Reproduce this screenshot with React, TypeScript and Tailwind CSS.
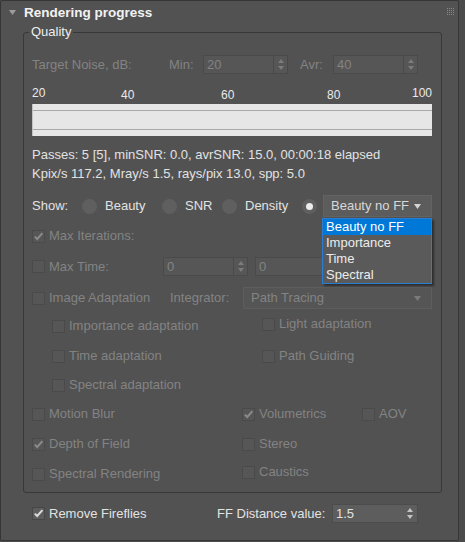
import React from 'react';

const DIM = 'text-[#838383]';
const LIT = 'text-[#e2e2e2]';

function Check({ checked = false, enabled = false }: { checked?: boolean; enabled?: boolean }) {
  return (
    <span
      className={`flex h-[13px] w-[13px] shrink-0 items-center justify-center border ${
        enabled ? 'border-[#474747] bg-[#5d5d5d]' : 'border-[#4a4a4a] bg-[#565656]'
      }`}
    >
      {checked && (
        <svg width="11" height="11" viewBox="0 0 11 11">
          <path d="M1.8 5.6 L4.2 8 L9.4 2.2" fill="none" stroke={enabled ? '#dadada' : '#8a8a8a'} strokeWidth="2" />
        </svg>
      )}
    </span>
  );
}

function CheckRow({
  label,
  checked = false,
  enabled = false,
  className = '',
}: {
  label: string;
  checked?: boolean;
  enabled?: boolean;
  className?: string;
}) {
  return (
    <div className={`flex h-[16px] items-center ${className}`}>
      <Check checked={checked} enabled={enabled} />
      <span className={`ml-[4px] whitespace-nowrap ${enabled ? LIT : DIM}`}>{label}</span>
    </div>
  );
}

function Spin({ value, enabled = false, className = '' }: { value: string; enabled?: boolean; className?: string }) {
  const arrow = enabled ? '#c4c4c4' : '#7c7c7c';
  return (
    <div
      className={`flex h-[19px] w-[85px] shrink-0 border ${
        enabled ? 'border-[#4c4c4c] bg-[#5d5d5d]' : 'border-[#4a4a4a] bg-[#565656]'
      } ${className}`}
    >
      <span className={`flex-1 pl-[3px] leading-[17px] ${enabled ? LIT : DIM}`}>{value}</span>
      <span
        className={`flex w-[14px] items-center justify-center ${enabled ? '' : 'border-l border-[#4a4a4a]'}`}
      >
        <svg width="6" height="11" viewBox="0 0 6 11">
          <path d="M0 4 L3 0 L6 4 Z" fill={arrow} />
          <path d="M0 7 L6 7 L3 11 Z" fill={arrow} />
        </svg>
      </span>
    </div>
  );
}

function Combo({ value, enabled = false, className = '' }: { value: string; enabled?: boolean; className?: string }) {
  return (
    <div
      className={`flex h-[22px] items-center border pl-[7px] pr-[10px] ${
        enabled ? 'border-[#636363] bg-[#5c5c5c] text-[#d8d8d8]' : `border-[#5d5d5d] bg-[#555555] ${DIM}`
      } ${className}`}
    >
      <span className="flex-1 whitespace-nowrap">{value}</span>
      <svg width="7" height="5" viewBox="0 0 7 5">
        <path d="M0 0 H7 L3.5 5 Z" fill={enabled ? '#d4d4d4' : '#7a7a7a'} />
      </svg>
    </div>
  );
}

function Radio({ on = false }: { on?: boolean }) {
  return (
    <span className="flex h-[15px] w-[15px] shrink-0 items-center justify-center rounded-full bg-[#5f5f5f]">
      {on && <span className="h-[7px] w-[7px] rounded-full bg-[#ececec]" />}
    </span>
  );
}

function Grip() {
  const dots = [];
  for (let r = 0; r < 4; r++) {
    for (let c = 0; c < 4; c++) {
      dots.push(<rect key={`${r}-${c}`} x={c * 2} y={r * 2} width="1" height="1" fill="#8a8a8a" />);
    }
  }
  return (
    <svg className="ml-auto mr-[3px] mt-[7px] self-start" width="8" height="8" viewBox="0 0 8 8">
      {dots}
    </svg>
  );
}

export default function App() {
  const menu = ['Beauty no FF', 'Importance', 'Time', 'Spectral'];

  return (
    <div className="h-[542px] w-[465px] bg-[#4b4b4b] font-['Liberation_Sans',Arial,sans-serif] text-[13px] leading-[16px]">
      <div className="h-[541px] w-[459px] rounded-[2px] border border-[#363636] bg-[#525252]">
        {/* Header */}
        <div className="flex h-[23px] items-center pl-[8px]">
          <svg width="7" height="5" viewBox="0 0 7 5">
            <path d="M0 0 H7 L3.5 5 Z" fill="#9c9c9c" />
          </svg>
          <span className="ml-[8px] text-[13.5px] font-bold text-[#f2f2f2]">Rendering progress</span>
          <Grip />
        </div>

        {/* Quality group */}
        <fieldset className="ml-[22px] w-[419px] rounded-[3px] border border-[#383838] px-[8px] pb-[10px]">
          <legend className="-ml-[3px] px-[2px] text-[#eeeeee]">Quality</legend>

          <div className="mt-[15px] flex h-[19px] items-center">
            <span className={`w-[137px] ${DIM}`}>Target Noise, dB:</span>
            <span className={`w-[34px] ${DIM}`}>Min:</span>
            <Spin value="20" />
            <span className={`ml-[12px] w-[33px] ${DIM}`}>Avr:</span>
            <Spin value="40" />
          </div>

          <div className="flex h-[30px] w-[400px] items-end text-[12px] leading-[14px] text-[#eaeaea]">
            <span className="mb-[4px] w-[89px]">20</span>
            <span className="mb-[2px] w-[100px]">40</span>
            <span className="mb-[2px] w-[106px]">60</span>
            <span className="mb-[2px] w-[84px]">80</span>
            <span className="mb-[4px] flex-1 text-right">100</span>
          </div>

          <div className="h-[32px] w-[400px] border-l border-[#c2c2c2] bg-[#e6e6e6] pt-[6px]">
            <div className="h-[20px] border-y border-[#a9a9a9]" />
          </div>

          <div className={`mt-[11px] whitespace-nowrap ${LIT}`}>
            Passes: 5 [5], minSNR: 0.0, avrSNR: 15.0, 00:00:18 elapsed
          </div>
          <div className={`mt-[3px] whitespace-nowrap ${LIT}`}>Kpix/s 117.2, Mray/s 1.5, rays/pix 13.0, spp: 5.0</div>

          <div className="mt-[13px] flex h-[22px] items-center">
            <span className={`w-[50px] ${LIT}`}>Show:</span>
            <span className="flex w-[80px] items-center">
              <Radio />
              <span className={`ml-[8px] ${LIT}`}>Beauty</span>
            </span>
            <span className="flex w-[60px] items-center">
              <Radio />
              <span className={`ml-[8px] ${LIT}`}>SNR</span>
            </span>
            <span className="flex w-[80px] items-center">
              <Radio />
              <span className={`ml-[8px] ${LIT}`}>Density</span>
            </span>
            <Radio on />
            <div className="relative ml-[6px] w-[109px]">
              <Combo value="Beauty no FF" enabled />
              <div className="absolute left-[-1px] top-[23px] z-10 w-[110px] border border-[#2a7dd0] bg-[#5a5a5a] shadow-[2px_2px_2px_rgba(0,0,0,0.45)]">
                {menu.map((item, i) => (
                  <div
                    key={item}
                    className={`h-[16px] pl-[3px] leading-[16px] ${
                      i === 0 ? 'bg-[#0078d7] text-white' : 'text-[#ececec]'
                    }`}
                  >
                    {item}
                  </div>
                ))}
              </div>
            </div>
          </div>

          <CheckRow className="mt-[11px]" label="Max Iterations:" checked />

          <div className="mt-[13px] flex h-[19px] items-center">
            <CheckRow className="w-[131px]" label="Max Time:" />
            <Spin value="0" />
            <Spin value="0" className="ml-[7px]" />
          </div>

          <div className="mt-[11px] flex h-[22px] items-center">
            <CheckRow className="w-[138px]" label="Image Adaptation" />
            <span className={`w-[73px] ${DIM}`}>Integrator:</span>
            <Combo value="Path Tracing" className="w-[189px]" />
          </div>

          <div className="flex">
            <div className="flex w-[230px] flex-col pl-[20px] pt-[9px]">
              <CheckRow label="Importance adaptation" />
              <CheckRow className="mt-[14px]" label="Time adaptation" />
              <CheckRow className="mt-[13px]" label="Spectral adaptation" />
            </div>
            <div className="flex flex-col pt-[7px]">
              <CheckRow label="Light adaptation" />
              <CheckRow className="mt-[16px]" label="Path Guiding" />
            </div>
          </div>

          <div className="mt-[13px] flex">
            <div className="flex w-[210px] flex-col">
              <CheckRow label="Motion Blur" />
              <CheckRow className="mt-[14px]" label="Depth of Field" checked />
              <CheckRow className="mt-[14px]" label="Spectral Rendering" />
            </div>
            <div className="flex w-[120px] flex-col">
              <CheckRow label="Volumetrics" checked />
              <CheckRow className="mt-[14px]" label="Stereo" />
              <CheckRow className="mt-[12px]" label="Caustics" />
            </div>
            <div className="flex flex-col">
              <CheckRow label="AOV" />
            </div>
          </div>
        </fieldset>

        <div className="mt-[11px] flex h-[19px] items-center pl-[31px]">
          <CheckRow className="w-[185px]" label="Remove Fireflies" checked enabled />
          <span className={`w-[115px] ${LIT}`}>FF Distance value:</span>
          <Spin value="1.5" enabled className="w-[86px]" />
        </div>
      </div>
    </div>
  );
}
